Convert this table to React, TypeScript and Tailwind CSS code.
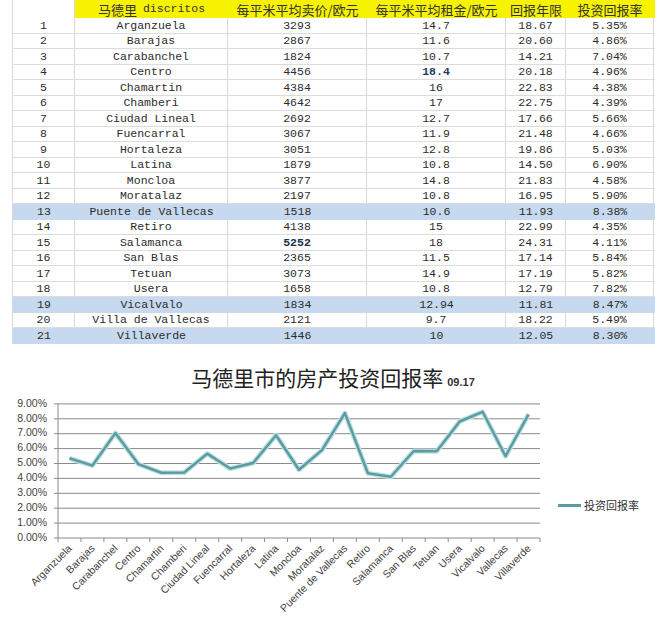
import React from 'react';

type Row = {
  no: number;
  name: string;
  price: string;
  rent: string;
  years: string;
  rate: string;
  hl?: boolean;
  bold?: 'rent' | 'price';
};

const rows: Row[] = [
  { no: 1, name: 'Arganzuela', price: '3293', rent: '14.7', years: '18.67', rate: '5.35%' },
  { no: 2, name: 'Barajas', price: '2867', rent: '11.6', years: '20.60', rate: '4.86%' },
  { no: 3, name: 'Carabanchel', price: '1824', rent: '10.7', years: '14.21', rate: '7.04%' },
  { no: 4, name: 'Centro', price: '4456', rent: '18.4', years: '20.18', rate: '4.96%', bold: 'rent' },
  { no: 5, name: 'Chamartin', price: '4384', rent: '16', years: '22.83', rate: '4.38%' },
  { no: 6, name: 'Chamberi', price: '4642', rent: '17', years: '22.75', rate: '4.39%' },
  { no: 7, name: 'Ciudad Lineal', price: '2692', rent: '12.7', years: '17.66', rate: '5.66%' },
  { no: 8, name: 'Fuencarral', price: '3067', rent: '11.9', years: '21.48', rate: '4.66%' },
  { no: 9, name: 'Hortaleza', price: '3051', rent: '12.8', years: '19.86', rate: '5.03%' },
  { no: 10, name: 'Latina', price: '1879', rent: '10.8', years: '14.50', rate: '6.90%' },
  { no: 11, name: 'Moncloa', price: '3877', rent: '14.8', years: '21.83', rate: '4.58%' },
  { no: 12, name: 'Moratalaz', price: '2197', rent: '10.8', years: '16.95', rate: '5.90%' },
  { no: 13, name: 'Puente de Vallecas', price: '1518', rent: '10.6', years: '11.93', rate: '8.38%', hl: true },
  { no: 14, name: 'Retiro', price: '4138', rent: '15', years: '22.99', rate: '4.35%' },
  { no: 15, name: 'Salamanca', price: '5252', rent: '18', years: '24.31', rate: '4.11%', bold: 'price' },
  { no: 16, name: 'San Blas', price: '2365', rent: '11.5', years: '17.14', rate: '5.84%' },
  { no: 17, name: 'Tetuan', price: '3073', rent: '14.9', years: '17.19', rate: '5.82%' },
  { no: 18, name: 'Usera', price: '1658', rent: '10.8', years: '12.79', rate: '7.82%' },
  { no: 19, name: 'Vicalvalo', price: '1834', rent: '12.94', years: '11.81', rate: '8.47%', hl: true },
  { no: 20, name: 'Villa de Vallecas', price: '2121', rent: '9.7', years: '18.22', rate: '5.49%' },
  { no: 21, name: 'Villaverde', price: '1446', rent: '10', years: '12.05', rate: '8.30%', hl: true },
];

const chartLabels = [
  'Arganzuela', 'Barajas', 'Carabanchel', 'Centro', 'Chamartin', 'Chamberi', 'Ciudad Lineal',
  'Fuencarral', 'Hortaleza', 'Latina', 'Moncloa', 'Moratalaz', 'Puente de Vallecas', 'Retiro',
  'Salamanca', 'San Blas', 'Tetuan', 'Usera', 'Vicalvalo', 'Vallecas', 'Villaverde',
];

const mono = 'font-["Liberation_Mono","Noto_Sans_CJK_SC",monospace]';

const Cell: React.FC<{ w: string; line: boolean; className?: string; children: React.ReactNode }> = ({ w, line, className, children }) => (
  <div className={`${w} shrink-0 h-full flex items-center justify-center ${line ? 'border-r border-[#d8d8d8]' : ''} ${className ?? ''}`}>
    {children}
  </div>
);

const RateChart: React.FC = () => {
  const left = 58;
  const right = 540;
  const base = 147;
  const step = 14.9;
  const catW = (right - left) / 21;
  const values = rows.map((r) => parseFloat(r.rate));
  const pts = values.map((v, i) => `${left + (i + 0.5) * catW},${base - v * step}`).join(' ');

  return (
    <svg width="550" height="230" className="shrink-0">
      {Array.from({ length: 10 }, (_, i) => {
        const y = base - i * step;
        return (
          <g key={i}>
            {i > 0 && <line x1={left} x2={right} y1={y} y2={y} stroke="#8a8a8a" strokeWidth="1" />}
            <line x1={left - 4} x2={left} y1={y} y2={y} stroke="#8a8a8a" strokeWidth="1" />
            <text x="47" y={y} textAnchor="end" dominantBaseline="middle" fontSize="10.5" fill="#3f3f3f" fontFamily="Liberation Sans, Arial, sans-serif">
              {`${i}.00%`}
            </text>
          </g>
        );
      })}
      <line x1={left} x2={left} y1={base - 9 * step} y2={base} stroke="#8a8a8a" strokeWidth="1" />
      <line x1={left} x2={right} y1={base} y2={base} stroke="#8a8a8a" strokeWidth="1" />
      {Array.from({ length: 22 }, (_, i) => (
        <line key={i} x1={left + i * catW} x2={left + i * catW} y1={base} y2={base + 4} stroke="#8a8a8a" strokeWidth="1" />
      ))}
      {chartLabels.map((label, i) => {
        const x = left + (i + 0.5) * catW + 3;
        const y = base + 11;
        return (
          <text key={label} x={x} y={y} textAnchor="end" transform={`rotate(-45 ${x} ${y})`} fontSize="10.5" fill="#3f3f3f" fontFamily="Liberation Sans, Arial, sans-serif">
            {label}
          </text>
        );
      })}
      <polyline points={pts} fill="none" stroke="#bfe0e2" strokeWidth="5" strokeLinejoin="round" />
      <polyline points={pts} fill="none" stroke="#5b9ca3" strokeWidth="2.5" strokeLinejoin="round" />
    </svg>
  );
};

export default function App() {
  return (
    <div className="w-[658px] h-[623px] bg-white overflow-hidden text-[#2b2b2b]">
      <div className="ml-[12px] w-[643px] border-l border-[#d8d8d8]">
        <div className="flex h-[18px] font-['Noto_Sans_CJK_SC',sans-serif] text-[13px] leading-none text-[#333]">
          <Cell w="w-[62px]" line className="bg-white">{''}</Cell>
          <div className="flex flex-1 h-full bg-[#f7f200]">
            <div className="w-[153px] shrink-0 flex items-center justify-center">
              马德里<span className={`${mono} text-[11.5px] ml-[6px]`}>discritos</span>
            </div>
            <div className="w-[139px] shrink-0 flex items-center justify-center">每平米平均卖价/欧元</div>
            <div className="w-[139px] shrink-0 flex items-center justify-center">每平米平均租金/欧元</div>
            <div className="w-[60px] shrink-0 flex items-center justify-center">回报年限</div>
            <div className="w-[88px] shrink-0 flex items-center justify-center">投资回报率</div>
          </div>
        </div>
        {rows.map((r) => (
          <div
            key={r.no}
            className={`flex h-[15.5px] border-b ${r.hl ? 'bg-[#c6d9ef] border-[#c6d9ef]' : 'border-[#dcdcdc]'} ${mono} text-[11.5px] leading-none`}
          >
            <Cell w="w-[62px]" line={!r.hl}>{r.no}</Cell>
            <Cell w="w-[153px]" line={!r.hl}>{r.name}</Cell>
            <Cell w="w-[139px]" line={!r.hl} className={r.bold === 'price' ? 'font-bold text-[#1e2f4a]' : ''}>{r.price}</Cell>
            <Cell w="w-[139px]" line={!r.hl} className={r.bold === 'rent' ? 'font-bold text-[#1e3a5c]' : ''}>{r.rent}</Cell>
            <Cell w="w-[60px]" line={!r.hl}>{r.years}</Cell>
            <Cell w="w-[88px]" line={!r.hl}>{r.rate}</Cell>
          </div>
        ))}
      </div>

      <div className="mt-[19px] flex items-baseline justify-center pl-[8px] h-[28px]">
        <span className="font-['Noto_Sans_CJK_SC',sans-serif] text-[21px] leading-[28px] text-[#222]">马德里市的房产投资回报率</span>
        <span className="font-['Liberation_Sans',sans-serif] text-[11px] font-bold ml-[4px] text-[#333]">09.17</span>
      </div>

      <div className="flex items-center">
        <RateChart />
        <div className="ml-[8px] flex items-center gap-[3px]">
          <span className="block w-[23px] h-[3px] bg-[#5b9ca3]" />
          <span className="font-['Noto_Sans_CJK_SC',sans-serif] text-[11px] text-[#333]">投资回报率</span>
        </div>
      </div>
    </div>
  );
}
